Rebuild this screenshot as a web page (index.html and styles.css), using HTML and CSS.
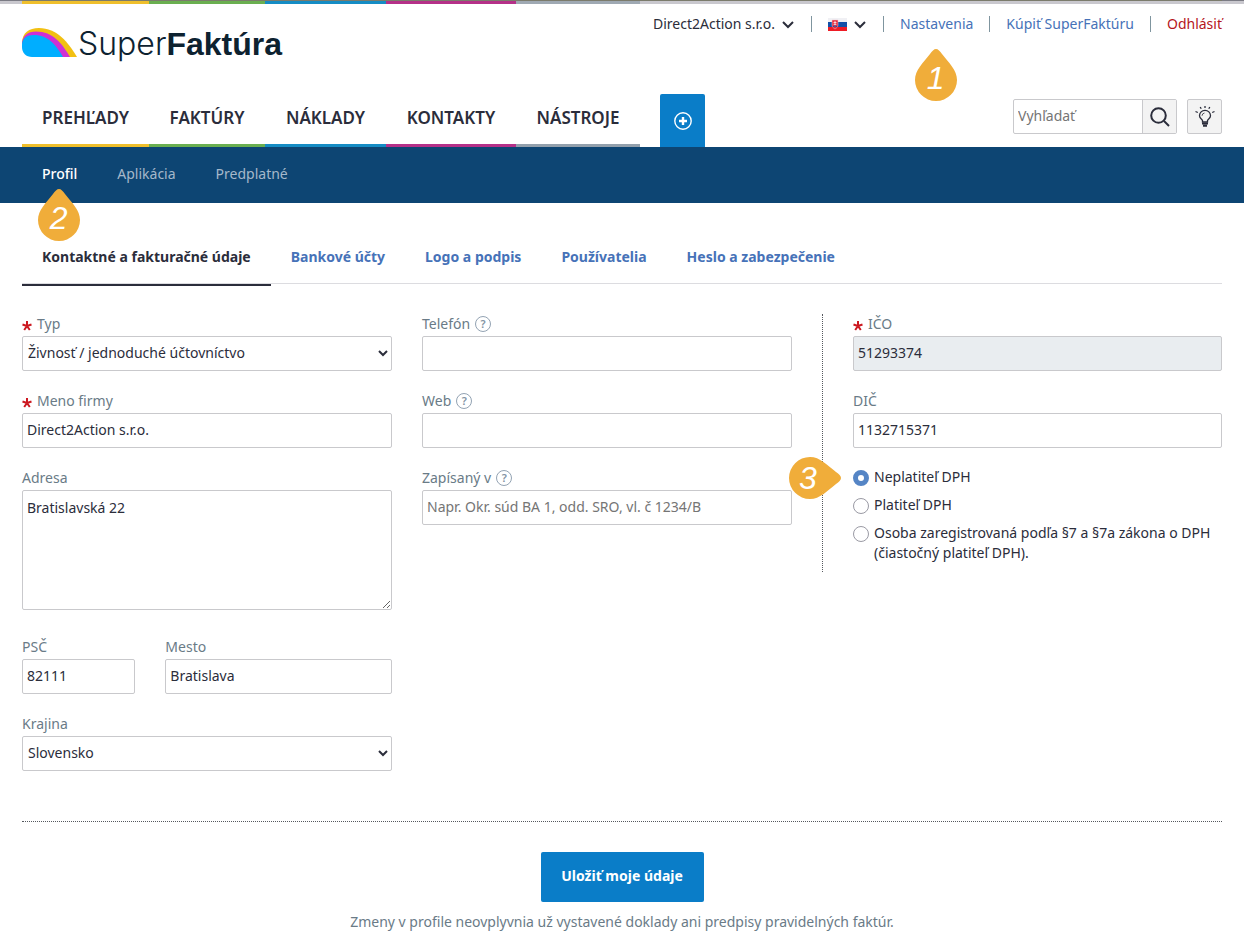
FILE: index.html
```html
<!DOCTYPE html>
<html lang="sk">
<head>
<meta charset="utf-8">
<meta name="viewport" content="width=device-width, initial-scale=1">
<title>SuperFaktúra – Nastavenia profilu</title>
<link rel="stylesheet" href="styles.css">
</head>
<body>
<div class="strip"><div class="strip-colors"><span class="c-yellow"></span><span class="c-green"></span><span class="c-blue"></span><span class="c-pink"></span><span class="c-gray"></span></div></div>
<header class="header">
  <div class="header-top">
    <a class="logo" href="#">
      <svg class="logo-mark" viewBox="0 0 56 30" aria-hidden="true">
        <path d="M0 16C0 6 7 1 17 1c18 0 29 14 38 29H40z" fill="#f2c012"/>
        <path d="M0 17C0 9 6 4.500 14 4.500c17 0 26 12 34 25.500H30z" fill="#cf30d4"/>
        <path d="M0 18C0 11 5 8 12 8c14 0 22 10 29 22H10C4 30 0 26 0 20z" fill="#00aeff"/>
      </svg>
      <span class="logo-light">Super</span><span class="logo-bold">Faktúra</span>
    </a>
    <div class="account">
      <button class="drop" type="button">Direct2Action s.r.o.
        <svg class="chevron" viewBox="0 0 14 9" aria-hidden="true"><path d="M2 2l5 5 5-5"/></svg>
      </button>
      <span class="sep"></span>
      <button class="drop" type="button" aria-label="Jazyk">
        <svg class="flag" viewBox="0 0 19 13" aria-hidden="true">
          <path d="M0 0h19v4H0z" fill="#f0f0f4"/><path d="M0 4h19v5H0z" fill="#1450a8"/><path d="M0 9h19v4H0z" fill="#ee1c25"/>
          <path d="M4 2h6v5c0 2-1.500 3-3 4-1.500-1-3-2-3-4z" fill="#e8283a" stroke="#f0c8d0" stroke-width=".5"/><path d="M7 3v5M5.500 4.500h3M5.500 6.300h3" stroke="#fff" stroke-width=".7"/><path d="M5 9l2-1.500L9 9" fill="none" stroke="#1450a8"/>
        </svg>
        <svg class="chevron" viewBox="0 0 14 9" aria-hidden="true"><path d="M2 2l5 5 5-5"/></svg>
      </button>
      <span class="sep"></span>
      <span class="pin-host"><a href="#">Nastavenia</a>
        <span class="pin pin-up pin-1"><svg viewBox="0 0 42 52" aria-hidden="true"><path d="M21 0c2 0 4 2 6 5 7 9 15 16 15 26a21 21 0 0 1-42 0C0 21 8 14 15 5c2-3 4-5 6-5z"/></svg><i>1</i></span>
      </span>
      <span class="sep"></span>
      <a href="#">Kúpiť SuperFaktúru</a>
      <span class="sep"></span>
      <a class="logout" href="#">Odhlásiť</a>
    </div>
  </div>
  <div class="header-nav">
    <nav class="main-nav">
      <a class="c-yellow" href="#">PREHĽADY</a><a class="c-green" href="#">FAKTÚRY</a><a class="c-blue" href="#">NÁKLADY</a><a class="c-pink" href="#">KONTAKTY</a><a class="c-gray" href="#">NÁSTROJE</a>
    </nav>
    <button class="add" type="button" aria-label="Pridať">
      <svg viewBox="0 0 18 18" aria-hidden="true"><circle cx="9" cy="9" r="8.200" stroke-width="1.400"/><path d="M9 5v8M5 9h8" stroke-width="2.400"/></svg>
    </button>
    <form class="search" role="search">
      <input type="search" placeholder="Vyhľadať" aria-label="Vyhľadať">
      <button type="button" aria-label="Hľadať"><svg class="icon-search" viewBox="0 0 20 20" aria-hidden="true"><circle cx="8.500" cy="8.500" r="7.300"/><path d="M14 14l5 5"/></svg></button>
    </form>
    <button class="tips" type="button" aria-label="Tipy">
      <svg class="icon-bulb" viewBox="0 0 20 22" aria-hidden="true"><path d="M7.500 16v-1.500C7 13 4.500 12.500 4.500 9.800a5.500 5.500 0 0 1 11 0c0 2.700-2.500 3.200-3 4.700V16z"/><path d="M7 9.800A3 3 0 0 1 9.500 7" stroke-width=".8"/><path d="M7 17.500h6M8 19.800h4" stroke-width="2"/><path d="M10 0v2M5.200 1l1 1.800M14.800 1l-1 1.800M.5 5.500l2.300 1M19.500 5.500l-2.300 1"/></svg>
    </button>
  </div>
</header>
<nav class="sub-nav">
  <span class="pin-host"><a class="active" href="#">Profil</a>
    <span class="pin pin-up pin-2"><svg viewBox="0 0 42 52" aria-hidden="true"><path d="M21 0c2 0 4 2 6 5 7 9 15 16 15 26a21 21 0 0 1-42 0C0 21 8 14 15 5c2-3 4-5 6-5z"/></svg><i>2</i></span>
  </span>
  <a href="#">Aplikácia</a>
  <a href="#">Predplatné</a>
</nav>
<main class="content">
  <nav class="tabs">
    <a class="active" href="#">Kontaktné a fakturačné údaje</a><a href="#">Bankové účty</a><a href="#">Logo a podpis</a><a href="#">Používatelia</a><a href="#">Heslo a zabezpečenie</a>
  </nav>
  <form>
    <div class="columns">
      <div class="column">
        <div class="field"><label for="typ"><svg class="star" viewBox="0 0 10 10" aria-hidden="true"><path d="M5 5V0M5 5L.5 3.500M5 5l4.500-1.500M5 5L2.200 9M5 5l2.800 4"/></svg>Typ</label>
          <select id="typ"><option>Živnosť / jednoduché účtovníctvo</option></select></div>
        <div class="field"><label for="meno"><svg class="star" viewBox="0 0 10 10" aria-hidden="true"><path d="M5 5V0M5 5L.5 3.500M5 5l4.500-1.500M5 5L2.200 9M5 5l2.800 4"/></svg>Meno firmy</label>
          <input id="meno" type="text" value="Direct2Action s.r.o."></div>
        <div class="field field-area"><label for="adresa">Adresa</label>
          <textarea id="adresa">Bratislavská 22</textarea></div>
        <div class="pair">
          <div class="field"><label for="psc">PSČ</label><input id="psc" type="text" value="82111"></div>
          <div class="field"><label for="mesto">Mesto</label><input id="mesto" type="text" value="Bratislava"></div>
        </div>
        <div class="field"><label for="krajina">Krajina</label>
          <select id="krajina"><option>Slovensko</option></select></div>
      </div>
      <div class="column">
        <div class="field"><label for="telefon">Telefón <span class="help">?</span></label><input id="telefon" type="text"></div>
        <div class="field"><label for="web">Web <span class="help">?</span></label><input id="web" type="text"></div>
        <div class="field"><label for="zapis">Zapísaný v <span class="help">?</span></label><input id="zapis" type="text" placeholder="Napr. Okr. súd BA 1, odd. SRO, vl. č 1234/B"></div>
      </div>
      <div class="column column-tax">
        <div class="field"><label for="ico"><svg class="star" viewBox="0 0 10 10" aria-hidden="true"><path d="M5 5V0M5 5L.5 3.500M5 5l4.500-1.500M5 5L2.200 9M5 5l2.800 4"/></svg>IČO</label><input id="ico" type="text" value="51293374" readonly></div>
        <div class="field"><label for="dic">DIČ</label><input id="dic" type="text" value="1132715371"></div>
        <div class="radios">
          <div class="pin-host"><label class="radio"><input type="radio" name="dph" checked><span>Neplatiteľ DPH</span></label>
            <span class="pin pin-right pin-3"><svg viewBox="0 0 52 42" aria-hidden="true"><path d="M52 21c0-2-2-4-5-6C38 8 31 0 21 0a21 21 0 0 0 0 42c10 0 17-8 26-15 3-2 5-4 5-6z"/></svg><i>3</i></span>
          </div>
          <label class="radio"><input type="radio" name="dph"><span>Platiteľ DPH</span></label>
          <label class="radio"><input type="radio" name="dph"><span>Osoba zaregistrovaná podľa §7 a §7a zákona o DPH (čiastočný platiteľ DPH).</span></label>
        </div>
      </div>
    </div>
    <div class="actions">
      <button class="save" type="button">Uložiť moje údaje</button>
      <p>Zmeny v profile neovplyvnia už vystavené doklady ani predpisy pravidelných faktúr.</p>
    </div>
  </form>
</main>
</body>
</html>
```
FILE: styles.css
```css
* { box-sizing: border-box; }
:root {
  --stripe: 127px 116px 121px 130px 124px;
  --ink: #2b2d3b;
  --muted: #6a7b87;
  --link: #4672b8;
  --line: #c9c9cc;
}
body {
  margin: 0;
  background: #fff;
  color: var(--ink);
  font: 14px/20px "Noto Sans", sans-serif;
}
a { color: var(--link); text-decoration: none; }
button, input, select, textarea { font: inherit; color: inherit; }
button { cursor: pointer; padding: 0; border: 0; background: none; }

.strip { height: 4px; padding: 0 22px; background: #c9c8ce; box-shadow: inset 0 1px #7b7b84; }
.strip-colors { display: grid; grid-template-columns: var(--stripe); height: 4px; border-top: 1px solid #7b7b6c; }
.c-yellow { --accent: #efbf2c; }
.c-green { --accent: #6aaf50; }
.c-blue { --accent: #158cc4; }
.c-pink { --accent: #b53088; }
.c-gray { --accent: #93a0ac; }
.strip-colors span { background: var(--accent); }
.strip-colors .c-gray { background: #9fa9b3; }

.header { padding: 0 22px; }
.header-top { display: flex; justify-content: space-between; align-items: flex-start; height: 90px; }
.logo { display: flex; align-items: flex-start; padding-top: 23px; color: #0d2230; line-height: 36px; }
.logo-mark { width: 56px; height: 30px; }
.logo-light { font: 300 32px/34px Inter, sans-serif; }
.logo-bold { font: bold 32px/34px "Liberation Sans", sans-serif; }
.account { display: flex; align-items: center; gap: 16px; padding-top: 10px; }
.drop { display: flex; align-items: center; gap: 6px; }
.chevron { width: 14px; height: 9px; fill: none; stroke: var(--ink); stroke-width: 2; }
.flag { width: 19px; height: 13px; }
.sep { width: 1px; height: 16px; background: #7f959f; }
.logout { color: #b5161c; }

.header-nav { display: flex; }
.main-nav { display: grid; grid-template-columns: var(--stripe); height: 53px; }
.main-nav a { border-bottom: 3px solid var(--accent); color: var(--ink); font-size: 17px; font-weight: 600; line-height: 48px; text-align: center; }
.add { width: 45px; height: 53px; margin-left: 20px; background: #0a7dc8; border-radius: 2px 2px 0 0; }
.add svg { width: 18px; height: 18px; fill: none; stroke: #fff; display: block; margin: 0 auto; }
.search { display: flex; width: 164px; height: 35px; margin: 5px 10px 0 auto; border: 1px solid var(--line); border-radius: 2px; }
.search input { flex: 1; min-width: 0; border: 0; padding: 0 4px 2px; background: none; }
.search button { width: 34px; border-left: 1px solid var(--line); background: #f3f3f3; }
.tips { width: 35px; height: 35px; margin-top: 5px; border: 1px solid var(--line); border-radius: 2px; background: #f3f3f3; }
.search svg, .tips svg { display: block; margin: 0 auto; fill: none; stroke: var(--ink); }
.icon-search { width: 20px; height: 20px; stroke-width: 2; }
.icon-bulb { width: 20px; height: 22px; stroke-width: 1.3; }
::placeholder { color: #757575; opacity: 1; }

.sub-nav { display: flex; gap: 40px; align-items: center; height: 56px; padding: 0 42px 2px; background: #0d4573; }
.sub-nav a { color: #a5b8ca; }
.sub-nav .active { color: #fff; font-weight: 500; }

.content { padding: 0 22px; }
.tabs { display: flex; height: 81px; padding-top: 27px; border-bottom: 1px solid #dcdce0; margin-bottom: 30px; }
.tabs a { height: 56px; padding: 17px 20px 0; font-weight: 700; }
.tabs .active { color: var(--ink); border-bottom: 2px solid var(--ink); }

.columns { display: grid; grid-template-columns: 37fr 37fr 40fr; gap: 30px; align-items: start; }
.column { display: grid; gap: 20px; min-width: 0; }
.column-tax { padding: 0 0 9px 30px; border-left: 1px dotted #55585e; }
.field { display: grid; min-width: 0; }
.field label { display: flex; align-items: center; height: 22px; padding-bottom: 3px; color: var(--muted); }
.star { width: 10px; height: 10px; margin: 4px 5px 0 0; fill: none; stroke: #cc1820; stroke-width: 2; }
.help { width: 16px; height: 16px; margin-left: 5px; border: 1px solid #93a3b3; border-radius: 50%; font-size: 11px; font-weight: 600; line-height: 14px; text-align: center; color: #8293a3; }
.field input, .field select, .field textarea { width: 100%; height: 35px; border: 1px solid var(--line); border-radius: 2px; background: #fff; padding: 0 4px 2px; }
.field select { padding: 0 1px 2px; }
.field textarea { display: block; height: 120px; padding: 7px 4px; resize: vertical; }
.field input[readonly] { background: #e9edf0; }
.field-area { margin-bottom: 7px; }
.pair { display: grid; grid-template-columns: 1fr 2fr; gap: 30px; }
.radios { display: grid; gap: 8px; margin-top: -1px; }
.radio { display: flex; gap: 5px; align-items: flex-start; }
.radio input { appearance: none; flex: none; width: 16px; height: 16px; margin: 3px 0 0; border: 1px solid #9a9aa4; border-radius: 50%; background: #fff; }
.radio input:checked { border: 5px solid #5585c5; }

.actions { margin-top: 50px; padding-top: 30px; border-top: 1px dotted #55585e; text-align: center; color: var(--muted); }
.save { min-width: 163px; height: 50px; padding: 0 20px 3px; border-radius: 2px; background: #0a7dc8; color: #fff; font-weight: 700; }
.actions p { margin: 10px 0; }

.pin-host { position: relative; }
.pin { position: absolute; display: grid; place-items: center; color: #fff; pointer-events: none; }
.pin svg { grid-area: 1 / 1; width: 100%; height: 100%; fill: #f0ad3a; }
.pin i { grid-area: 1 / 1; z-index: 1; font: italic 32px/32px "Liberation Sans", sans-serif; }
.pin-up { width: 42px; height: 52px; }
.pin-up i { padding-top: 6px; }
.pin-right { width: 52px; height: 42px; }
.pin-right i { padding-right: 14px; }
.pin-1 { top: 35px; left: calc(50% - 22px); }
.pin-2 { top: 25px; left: calc(50% - 22px); }
.pin-3 { top: -10px; right: calc(100% + 12px); }
```
